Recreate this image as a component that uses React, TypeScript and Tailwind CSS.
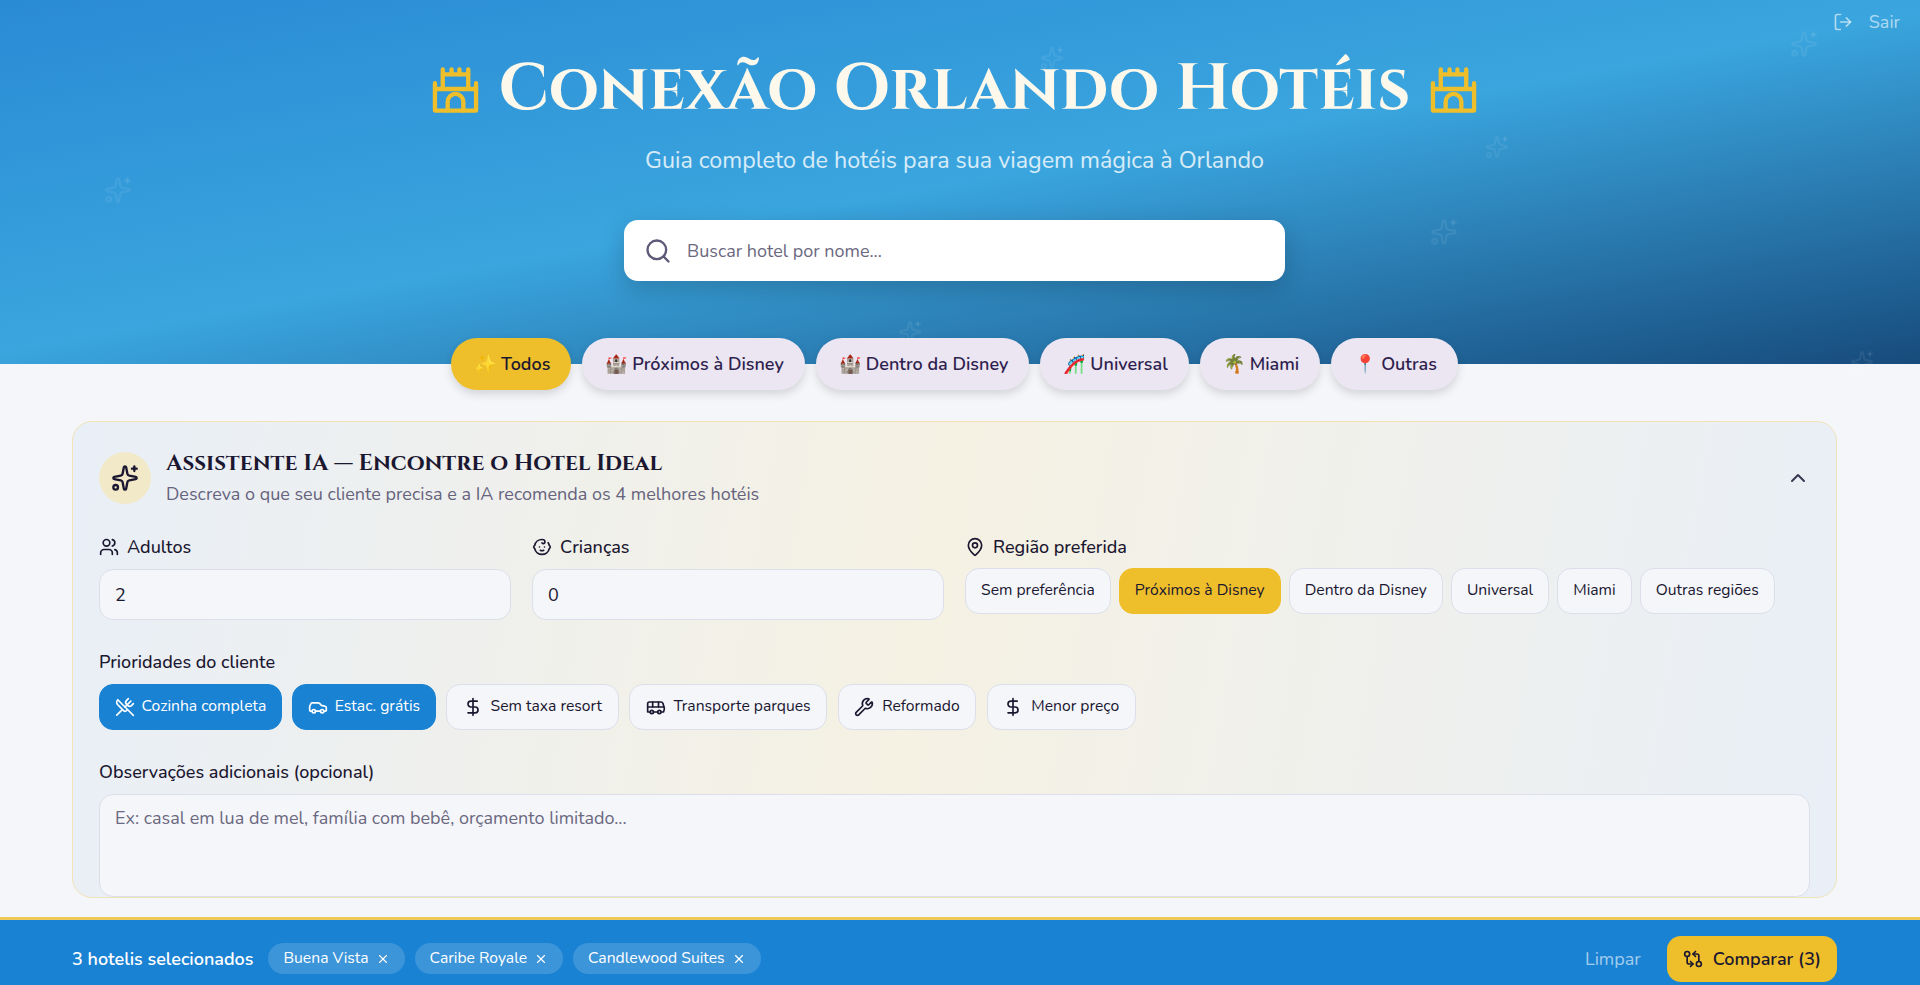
import { Baby, Bus, Car, ChevronUp, DollarSign, GitCompareArrows, LogOut, MapPin, Search, Sparkles, UtensilsCrossed, Users, Wrench, X } from 'lucide-react';
import type { ReactNode } from 'react';

const body = "font-['Nunito','Lato','Noto_Sans',sans-serif]";
const display = "font-['Cinzel','Liberation_Serif',serif]";

function CastleLogo() {
  return (
    <svg viewBox="0 0 48 48" fill="none" stroke="#efbf2b" strokeWidth="4.4" strokeLinecap="round" strokeLinejoin="round" className="w-[47px] h-12 shrink-0">
      <path d="M11 23V8h26v15" />
      <path d="M11 3v5M20 3v5M28 3v5M37 3v5" />
      <path d="M3 17v28h42V17" />
      <path d="M3 23h42" />
      <path d="M16 45V36a8 8 0 0 1 16 0v9" />
    </svg>
  );
}

function Star({ className }: { className: string }) {
  return <Sparkles className={`absolute text-white/[0.07] ${className}`} strokeWidth={2} />;
}

const tabs = [
  { emoji: '✨', label: 'Todos', active: true },
  { emoji: '🏰', label: 'Próximos à Disney' },
  { emoji: '🏰', label: 'Dentro da Disney' },
  { emoji: '🎢', label: 'Universal' },
  { emoji: '🌴', label: 'Miami' },
  { emoji: '📍', label: 'Outras' },
];

const regions = ['Sem preferência', 'Próximos à Disney', 'Dentro da Disney', 'Universal', 'Miami', 'Outras regiões'];

const priorities: { icon: ReactNode; label: string; active?: boolean }[] = [
  { icon: <UtensilsCrossed className="w-5 h-5" />, label: 'Cozinha completa', active: true },
  { icon: <Car className="w-5 h-5" />, label: 'Estac. grátis', active: true },
  { icon: <DollarSign className="w-5 h-5" />, label: 'Sem taxa resort' },
  { icon: <Bus className="w-5 h-5" />, label: 'Transporte parques' },
  { icon: <Wrench className="w-5 h-5" />, label: 'Reformado' },
  { icon: <DollarSign className="w-5 h-5" />, label: 'Menor preço' },
];

export default function App() {
  return (
    <div className={`relative h-[985px] overflow-hidden bg-[#f4f6fa] text-[#1b1730] ${body}`}>
      <header className="relative h-[364px] bg-[linear-gradient(170deg,#2a8bd5_0%,#3aa5de_50%,#174b7c_100%)]">
        <Star className="left-[104px] top-[176px] w-7 h-7" />
        <Star className="left-[1040px] top-[46px] w-6 h-6" />
        <Star className="left-[1790px] top-[30px] w-7 h-7" />
        <Star className="left-[1485px] top-[135px] w-6 h-6" />
        <Star className="left-[1430px] top-[218px] w-7 h-7" />
        <Star className="left-[898px] top-[320px] w-6 h-6" />
        <Star className="left-[1850px] top-[350px] w-6 h-6" />

        <button className="absolute right-[20px] top-[8px] flex items-center gap-4 text-lg text-white/60">
          <LogOut className="w-5 h-5" />
          Sair
        </button>

        <div className="flex flex-col items-center pr-[11px] pt-[50px]">
          <div className="flex h-[76px] translate-y-[2px] items-center gap-[19px]">
            <CastleLogo />
            <h1 className={`text-[64.5px] leading-[76px] font-bold text-[#fdf8ec] ${display}`}>Conexão Orlando Hotéis</h1>
            <CastleLogo />
          </div>
          <p className="mt-[18px] text-[23.3px] leading-[32px] text-white/80">Guia completo de hotéis para sua viagem mágica à Orlando</p>
          <div className="mt-[44px] flex h-[61px] w-[661px] items-center gap-[15px] rounded-[14px] bg-white px-[20px] shadow-[0_8px_24px_rgba(0,0,0,0.18)]">
            <Search className="w-7 h-7 text-[#5d5a78]" />
            <span className="text-lg text-[#6b6880]">Buscar hotel por nome...</span>
          </div>
        </div>
      </header>

      <nav className="relative z-10 -mt-[26px] flex justify-center gap-[11px] pr-[11px]">
        {tabs.map((t) => (
          <div
            key={t.label}
            className={`flex h-[52px] items-center gap-[5px] rounded-full pl-[23px] pr-[21px] text-lg font-semibold shadow-[0_4px_10px_rgba(0,0,0,0.14)] ${
              t.active ? 'bg-[#efbf2b] text-[#1b1730]' : 'bg-[#ece6f2] text-[#2f1f4f]'
            }`}
          >
            <span className="text-lg">{t.emoji}</span>
            {t.label}
          </div>
        ))}
      </nav>

      <section className="ml-[72px] mr-[83px] mt-[31px] rounded-[20px] border border-[#f1e3b8] bg-[linear-gradient(100deg,#e9eff7_0%,#f5f1e3_48%,#e9eff7_100%)] px-[26px] pt-[27px]">
        <div className="flex items-center">
          <div className="flex h-[52px] w-[52px] items-center justify-center rounded-full bg-[#f2e9c9]">
            <Sparkles className="w-7 h-7 text-[#1b1730]" />
          </div>
          <div className="ml-[15px] flex-1">
            <h2 className={`text-[23px] leading-[30px] font-semibold ${display}`}>Assistente IA — Encontre o Hotel Ideal</h2>
            <p className="mt-[2px] text-lg leading-[26px] text-[#66637d]">Descreva o que seu cliente precisa e a IA recomenda os 4 melhores hotéis</p>
          </div>
          <ChevronUp className="w-6 h-6 text-[#3b3852]" />
        </div>

        <div className="mt-[28px] flex gap-[21px]">
          <div className="w-[412px]">
            <label className="flex h-[24px] items-center gap-[8px] text-lg font-medium">
              <Users className="w-5 h-5" />
              Adultos
            </label>
            <div className="mt-[10px] flex h-[51px] items-center rounded-[14px] border border-[#dcdfea] bg-[#f4f6fa] px-[15px] text-lg">2</div>
          </div>
          <div className="w-[412px]">
            <label className="flex h-[24px] items-center gap-[8px] text-lg font-medium">
              <Baby className="w-5 h-5" />
              Crianças
            </label>
            <div className="mt-[10px] flex h-[51px] items-center rounded-[14px] border border-[#dcdfea] bg-[#f4f6fa] px-[15px] text-lg">0</div>
          </div>
          <div>
            <label className="flex h-[24px] items-center gap-[8px] text-lg font-medium">
              <MapPin className="w-5 h-5" />
              Região preferida
            </label>
            <div className="mt-[9px] flex gap-[8px]">
              {regions.map((r, i) => (
                <div
                  key={r}
                  className={`flex h-[46px] items-center rounded-[14px] border px-[15px] text-[15.7px] ${
                    i === 1 ? 'border-[#efbf2b] bg-[#efbf2b]' : 'border-[#dcdfea] bg-[#f4f6fa]'
                  }`}
                >
                  {r}
                </div>
              ))}
            </div>
          </div>
        </div>

        <label className="mt-[29px] block text-lg font-medium leading-[26px]">Prioridades do cliente</label>
        <div className="mt-[9px] flex gap-[10.5px]">
          {priorities.map((p) => (
            <div
              key={p.label}
              className={`flex h-[46px] items-center rounded-[14px] border text-[15.7px] ${
                p.active ? 'gap-[7px] border-[#1a82d3] bg-[#1a82d3] px-[14.5px] text-white' : 'gap-[8px] border-[#dcdfea] bg-[#f4f6fa] px-[15.5px]'
              }`}
            >
              {p.icon}
              {p.label}
            </div>
          ))}
        </div>

        <label className="mt-[29px] block text-lg font-medium leading-[26px]">Observações adicionais (opcional)</label>
        <div className="mt-[9px] h-[103px] rounded-[14px] border border-[#dcdfea] bg-[#f4f6fa] px-[15px] py-[9px] text-lg text-[#6b6880]">
          Ex: casal em lua de mel, família com bebê, orçamento limitado...
        </div>
      </section>

      <footer className="absolute inset-x-0 top-[917px] flex h-[80px] items-center border-t-[3px] border-[#efc95a] bg-[#1a82d3] pl-[72px] pr-[83px]">
        <span className="text-lg font-semibold text-white">3 hotelis selecionados</span>
        <div className="ml-[15px] flex flex-1 gap-[10px]">
          {['Buena Vista', 'Caribe Royale', 'Candlewood Suites'].map((h) => (
            <div key={h} className="flex h-[31px] items-center gap-[7px] rounded-full bg-white/15 px-[15px] text-[15.7px] text-white">
              {h}
              <X className="w-[14px] h-[14px]" />
            </div>
          ))}
        </div>
        <span className="mr-[26px] text-lg text-white/60">Limpar</span>
        <button className="flex h-[46px] items-center gap-[10px] rounded-[14px] bg-[#efbf2b] px-4 text-lg font-semibold text-[#1b1730]">
          <GitCompareArrows className="w-5 h-5" />
          Comparar (3)
        </button>
      </footer>
    </div>
  );
}
